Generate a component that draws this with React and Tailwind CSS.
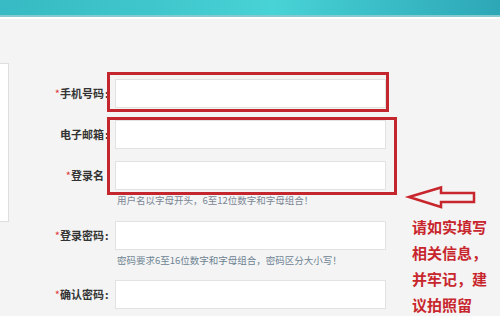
export default function App() {
  const font = { fontFamily: '"Noto Sans CJK SC", "Noto Sans", sans-serif' };
  const Field = ({ label, req, colon = true, className = "" }) => (
    <div className={"flex items-center h-[29px] " + className}>
      <div className="w-[95px] text-right text-[11px] font-bold text-[#333] leading-none whitespace-nowrap">
        {req && <span className="text-[#e0383e] font-normal">*</span>}
        {label}
      </div>
      <div className="w-[8px] text-[11px] font-bold text-[#333] leading-none pl-[1px]">{colon ? ":" : ""}</div>
      <div className="ml-[3px] w-[271px] h-[29px] bg-white border border-[#e2e2e2]" />
    </div>
  );
  return (
    <div className="relative w-[500px] h-[316px] overflow-hidden bg-[#f4f4f4]" style={font}>
      <div className="h-[15px] bg-[linear-gradient(90deg,#37bac3_0%,#3fc6cc_30%,#48d3d6_55%,#3ec3cb_70%,#2da7b6_100%)]" />
      <div className="h-[2px] bg-[#86c9ce]" />
      <div className="h-[2px] bg-white" />
      <div className="flex">
        <div className="mt-[44px] w-[9px] h-[159px] bg-white border-y border-r border-[#dedede]" />
        <div className="pt-[60px] flex flex-col">
          <Field label="手机号码" req />
          <Field label="电子邮箱" className="mt-[12px]" />
          <Field label="登录名" req colon={false} className="mt-[12px]" />
          <div className="mt-[2px] pl-[108px] h-[16px] leading-[16px] text-[9.5px] text-[#7b8794] whitespace-nowrap">
            用户名以字母开头，6至12位数字和字母组合！
          </div>
          <Field label="登录密码" req className="mt-[13px]" />
          <div className="mt-[2px] pl-[108px] h-[16px] leading-[16px] text-[9.5px] text-[#6d8393] whitespace-nowrap">
            密码要求6至16位数字和字母组合，密码区分大小写！
          </div>
          <Field label="确认密码" req className="mt-[12px]" />
        </div>
      </div>

      <div className="absolute left-[107px] top-[72px] w-[282px] h-[40px] border-[3px] border-[#c4262e]" />
      <div className="absolute left-[107px] top-[117px] w-[290px] h-[78px] border-[3px] border-[#c4262e]" />

      <svg className="absolute left-0 top-0" width="500" height="316" viewBox="0 0 500 316">
        <polygon
          points="409,197 441,187.5 441,193 474,193 474,202 441,202 441,207"
          fill="none"
          stroke="#c8262d"
          strokeWidth="2.5"
          strokeLinejoin="miter"
        />
      </svg>

      <div className="absolute left-[412px] top-[214px] text-[15px] font-bold leading-[26px] text-[#c8262d] whitespace-nowrap">
        <div>请如实填写</div>
        <div>相关信息，</div>
        <div>并牢记，建</div>
        <div>议拍照留</div>
      </div>
    </div>
  );
}
